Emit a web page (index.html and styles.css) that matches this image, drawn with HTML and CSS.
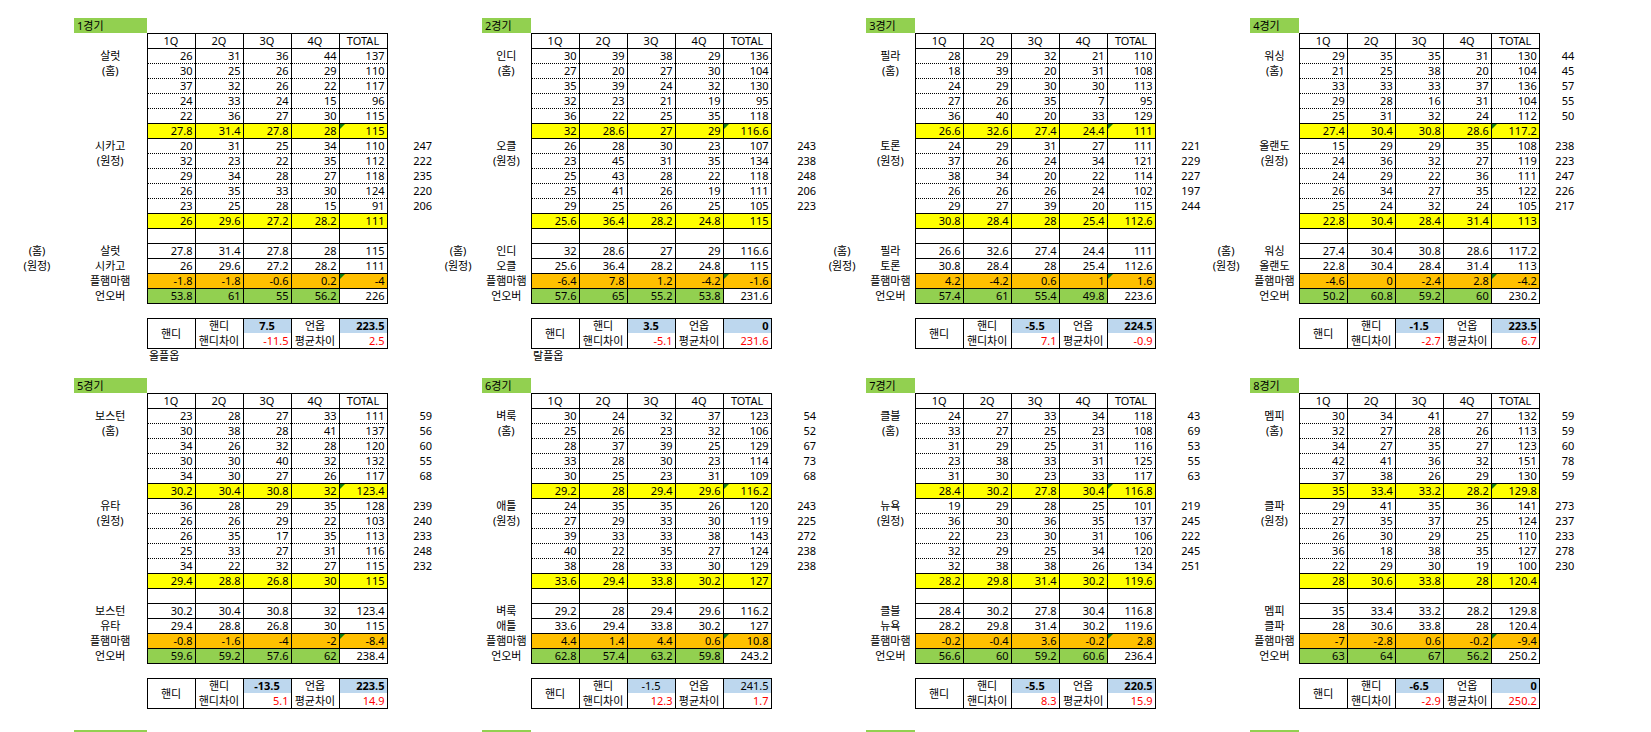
FILE: index.html
```html
<!DOCTYPE html>
<html lang="ko">
<head>
<meta charset="utf-8">
<title>경기 분석</title>
<link rel="stylesheet" href="styles.css">
</head>
<body>
<div class="sheet">
<div class="sec s1">

<table class="blk b1">
<colgroup><col class="ch1"><col class="cl1"><col class="cq"><col class="cq"><col class="cq"><col class="cq"><col class="cq"><col class="cx"></colgroup>
<tr><td></td><td class="t">1경기</td><td colspan="6"></td></tr>
<tr class="r hdr"><td></td><td></td><td>1Q</td><td>2Q</td><td>3Q</td><td>4Q</td><td>TOTAL</td><td></td></tr>
<tr class="r dr"><td></td><td>살럿</td><td>26</td><td>31</td><td>36</td><td>44</td><td>137</td><td></td></tr>
<tr class="r dr"><td></td><td>(홈)</td><td>30</td><td>25</td><td>26</td><td>29</td><td>110</td><td></td></tr>
<tr class="r dr"><td></td><td></td><td>37</td><td>32</td><td>26</td><td>22</td><td>117</td><td></td></tr>
<tr class="r dr"><td></td><td></td><td>24</td><td>33</td><td>24</td><td>15</td><td>96</td><td></td></tr>
<tr class="r dr"><td></td><td></td><td>22</td><td>36</td><td>27</td><td>30</td><td>115</td><td></td></tr>
<tr class="r yl k"><td></td><td></td><td>27.8</td><td>31.4</td><td>27.8</td><td>28</td><td>115</td><td></td></tr>
<tr class="r dr"><td></td><td>시카고</td><td>20</td><td>31</td><td>25</td><td>34</td><td>110</td><td>247</td></tr>
<tr class="r dr"><td></td><td>(원정)</td><td>32</td><td>23</td><td>22</td><td>35</td><td>112</td><td>222</td></tr>
<tr class="r dr"><td></td><td></td><td>29</td><td>34</td><td>28</td><td>27</td><td>118</td><td>235</td></tr>
<tr class="r dr"><td></td><td></td><td>26</td><td>35</td><td>33</td><td>30</td><td>124</td><td>220</td></tr>
<tr class="r dr"><td></td><td></td><td>23</td><td>25</td><td>28</td><td>15</td><td>91</td><td>206</td></tr>
<tr class="r yl"><td></td><td></td><td>26</td><td>29.6</td><td>27.2</td><td>28.2</td><td>111</td><td></td></tr>
<tr class="r sm"><td></td><td></td><td></td><td></td><td></td><td></td><td></td><td></td></tr>
<tr class="r sm"><td>(홈)</td><td>살럿</td><td>27.8</td><td>31.4</td><td>27.8</td><td>28</td><td>115</td><td></td></tr>
<tr class="r sm"><td>(원정)</td><td>시카고</td><td>26</td><td>29.6</td><td>27.2</td><td>28.2</td><td>111</td><td></td></tr>
<tr class="r sm or k"><td></td><td>플햄마햄</td><td>-1.8</td><td>-1.8</td><td>-0.6</td><td>0.2</td><td>-4</td><td></td></tr>
<tr class="r sm gr"><td></td><td>언오버</td><td>53.8</td><td>61</td><td>55</td><td>56.2</td><td>226</td><td></td></tr>
<tr class="bl"><td colspan="8"></td></tr>
<tr class="h1"><td></td><td></td><td class="hb" rowspan="2">핸디</td><td class="hl">핸디</td><td class="hv">7.5</td><td class="hl">언옵</td><td class="hv hr">223.5</td><td></td></tr>
<tr class="h2"><td></td><td></td><td class="hl">핸디차이</td><td class="rv">-11.5</td><td class="hl">평균차이</td><td class="rv">2.5</td><td></td></tr>
<tr class="note"><td></td><td></td><td colspan="6">올플옵</td></tr>
</table>

<table class="blk">
<colgroup><col class="ch"><col class="cl"><col class="cq"><col class="cq"><col class="cq"><col class="cq"><col class="cq"><col class="cx"></colgroup>
<tr><td></td><td class="t">2경기</td><td colspan="6"></td></tr>
<tr class="r hdr"><td></td><td></td><td>1Q</td><td>2Q</td><td>3Q</td><td>4Q</td><td>TOTAL</td><td></td></tr>
<tr class="r dr"><td></td><td>인디</td><td>30</td><td>39</td><td>38</td><td>29</td><td>136</td><td></td></tr>
<tr class="r dr"><td></td><td>(홈)</td><td>27</td><td>20</td><td>27</td><td>30</td><td>104</td><td></td></tr>
<tr class="r dr"><td></td><td></td><td>35</td><td>39</td><td>24</td><td>32</td><td>130</td><td></td></tr>
<tr class="r dr"><td></td><td></td><td>32</td><td>23</td><td>21</td><td>19</td><td>95</td><td></td></tr>
<tr class="r dr"><td></td><td></td><td>36</td><td>22</td><td>25</td><td>35</td><td>118</td><td></td></tr>
<tr class="r yl k"><td></td><td></td><td>32</td><td>28.6</td><td>27</td><td>29</td><td>116.6</td><td></td></tr>
<tr class="r dr"><td></td><td>오클</td><td>26</td><td>28</td><td>30</td><td>23</td><td>107</td><td>243</td></tr>
<tr class="r dr"><td></td><td>(원정)</td><td>23</td><td>45</td><td>31</td><td>35</td><td>134</td><td>238</td></tr>
<tr class="r dr"><td></td><td></td><td>25</td><td>43</td><td>28</td><td>22</td><td>118</td><td>248</td></tr>
<tr class="r dr"><td></td><td></td><td>25</td><td>41</td><td>26</td><td>19</td><td>111</td><td>206</td></tr>
<tr class="r dr"><td></td><td></td><td>29</td><td>25</td><td>26</td><td>25</td><td>105</td><td>223</td></tr>
<tr class="r yl"><td></td><td></td><td>25.6</td><td>36.4</td><td>28.2</td><td>24.8</td><td>115</td><td></td></tr>
<tr class="r sm"><td></td><td></td><td></td><td></td><td></td><td></td><td></td><td></td></tr>
<tr class="r sm"><td>(홈)</td><td>인디</td><td>32</td><td>28.6</td><td>27</td><td>29</td><td>116.6</td><td></td></tr>
<tr class="r sm"><td>(원정)</td><td>오클</td><td>25.6</td><td>36.4</td><td>28.2</td><td>24.8</td><td>115</td><td></td></tr>
<tr class="r sm or k"><td></td><td>플햄마햄</td><td>-6.4</td><td>7.8</td><td>1.2</td><td>-4.2</td><td>-1.6</td><td></td></tr>
<tr class="r sm gr"><td></td><td>언오버</td><td>57.6</td><td>65</td><td>55.2</td><td>53.8</td><td>231.6</td><td></td></tr>
<tr class="bl"><td colspan="8"></td></tr>
<tr class="h1"><td></td><td></td><td class="hb" rowspan="2">핸디</td><td class="hl">핸디</td><td class="hv">3.5</td><td class="hl">언옵</td><td class="hv hr">0</td><td></td></tr>
<tr class="h2"><td></td><td></td><td class="hl">핸디차이</td><td class="rv">-5.1</td><td class="hl">평균차이</td><td class="rv">231.6</td><td></td></tr>
<tr class="note"><td></td><td></td><td colspan="6">랄플옵</td></tr>
</table>

<table class="blk">
<colgroup><col class="ch"><col class="cl"><col class="cq"><col class="cq"><col class="cq"><col class="cq"><col class="cq"><col class="cx"></colgroup>
<tr><td></td><td class="t">3경기</td><td colspan="6"></td></tr>
<tr class="r hdr"><td></td><td></td><td>1Q</td><td>2Q</td><td>3Q</td><td>4Q</td><td>TOTAL</td><td></td></tr>
<tr class="r dr"><td></td><td>필라</td><td>28</td><td>29</td><td>32</td><td>21</td><td>110</td><td></td></tr>
<tr class="r dr"><td></td><td>(홈)</td><td>18</td><td>39</td><td>20</td><td>31</td><td>108</td><td></td></tr>
<tr class="r dr"><td></td><td></td><td>24</td><td>29</td><td>30</td><td>30</td><td>113</td><td></td></tr>
<tr class="r dr"><td></td><td></td><td>27</td><td>26</td><td>35</td><td>7</td><td>95</td><td></td></tr>
<tr class="r dr"><td></td><td></td><td>36</td><td>40</td><td>20</td><td>33</td><td>129</td><td></td></tr>
<tr class="r yl k"><td></td><td></td><td>26.6</td><td>32.6</td><td>27.4</td><td>24.4</td><td>111</td><td></td></tr>
<tr class="r dr"><td></td><td>토론</td><td>24</td><td>29</td><td>31</td><td>27</td><td>111</td><td>221</td></tr>
<tr class="r dr"><td></td><td>(원정)</td><td>37</td><td>26</td><td>24</td><td>34</td><td>121</td><td>229</td></tr>
<tr class="r dr"><td></td><td></td><td>38</td><td>34</td><td>20</td><td>22</td><td>114</td><td>227</td></tr>
<tr class="r dr"><td></td><td></td><td>26</td><td>26</td><td>26</td><td>24</td><td>102</td><td>197</td></tr>
<tr class="r dr"><td></td><td></td><td>29</td><td>27</td><td>39</td><td>20</td><td>115</td><td>244</td></tr>
<tr class="r yl"><td></td><td></td><td>30.8</td><td>28.4</td><td>28</td><td>25.4</td><td>112.6</td><td></td></tr>
<tr class="r sm"><td></td><td></td><td></td><td></td><td></td><td></td><td></td><td></td></tr>
<tr class="r sm"><td>(홈)</td><td>필라</td><td>26.6</td><td>32.6</td><td>27.4</td><td>24.4</td><td>111</td><td></td></tr>
<tr class="r sm"><td>(원정)</td><td>토론</td><td>30.8</td><td>28.4</td><td>28</td><td>25.4</td><td>112.6</td><td></td></tr>
<tr class="r sm or k"><td></td><td>플햄마햄</td><td>4.2</td><td>-4.2</td><td>0.6</td><td>1</td><td>1.6</td><td></td></tr>
<tr class="r sm gr"><td></td><td>언오버</td><td>57.4</td><td>61</td><td>55.4</td><td>49.8</td><td>223.6</td><td></td></tr>
<tr class="bl"><td colspan="8"></td></tr>
<tr class="h1"><td></td><td></td><td class="hb" rowspan="2">핸디</td><td class="hl">핸디</td><td class="hv">-5.5</td><td class="hl">언옵</td><td class="hv hr">224.5</td><td></td></tr>
<tr class="h2"><td></td><td></td><td class="hl">핸디차이</td><td class="rv">7.1</td><td class="hl">평균차이</td><td class="rv">-0.9</td><td></td></tr>
</table>

<table class="blk b4">
<colgroup><col class="ch"><col class="cl"><col class="cq"><col class="cq"><col class="cq"><col class="cq"><col class="cq"><col class="cx4"></colgroup>
<tr><td></td><td class="t">4경기</td><td colspan="6"></td></tr>
<tr class="r hdr"><td></td><td></td><td>1Q</td><td>2Q</td><td>3Q</td><td>4Q</td><td>TOTAL</td><td></td></tr>
<tr class="r dr"><td></td><td>워싱</td><td>29</td><td>35</td><td>35</td><td>31</td><td>130</td><td>44</td></tr>
<tr class="r dr"><td></td><td>(홈)</td><td>21</td><td>25</td><td>38</td><td>20</td><td>104</td><td>45</td></tr>
<tr class="r dr"><td></td><td></td><td>33</td><td>33</td><td>33</td><td>37</td><td>136</td><td>57</td></tr>
<tr class="r dr"><td></td><td></td><td>29</td><td>28</td><td>16</td><td>31</td><td>104</td><td>55</td></tr>
<tr class="r dr"><td></td><td></td><td>25</td><td>31</td><td>32</td><td>24</td><td>112</td><td>50</td></tr>
<tr class="r yl k"><td></td><td></td><td>27.4</td><td>30.4</td><td>30.8</td><td>28.6</td><td>117.2</td><td></td></tr>
<tr class="r dr"><td></td><td>올랜도</td><td>15</td><td>29</td><td>29</td><td>35</td><td>108</td><td>238</td></tr>
<tr class="r dr"><td></td><td>(원정)</td><td>24</td><td>36</td><td>32</td><td>27</td><td>119</td><td>223</td></tr>
<tr class="r dr"><td></td><td></td><td>24</td><td>29</td><td>22</td><td>36</td><td>111</td><td>247</td></tr>
<tr class="r dr"><td></td><td></td><td>26</td><td>34</td><td>27</td><td>35</td><td>122</td><td>226</td></tr>
<tr class="r dr"><td></td><td></td><td>25</td><td>24</td><td>32</td><td>24</td><td>105</td><td>217</td></tr>
<tr class="r yl"><td></td><td></td><td>22.8</td><td>30.4</td><td>28.4</td><td>31.4</td><td>113</td><td></td></tr>
<tr class="r sm"><td></td><td></td><td></td><td></td><td></td><td></td><td></td><td></td></tr>
<tr class="r sm"><td>(홈)</td><td>워싱</td><td>27.4</td><td>30.4</td><td>30.8</td><td>28.6</td><td>117.2</td><td></td></tr>
<tr class="r sm"><td>(원정)</td><td>올랜도</td><td>22.8</td><td>30.4</td><td>28.4</td><td>31.4</td><td>113</td><td></td></tr>
<tr class="r sm or k"><td></td><td>플햄마햄</td><td>-4.6</td><td>0</td><td>-2.4</td><td>2.8</td><td>-4.2</td><td></td></tr>
<tr class="r sm gr"><td></td><td>언오버</td><td>50.2</td><td>60.8</td><td>59.2</td><td>60</td><td>230.2</td><td></td></tr>
<tr class="bl"><td colspan="8"></td></tr>
<tr class="h1"><td></td><td></td><td class="hb" rowspan="2">핸디</td><td class="hl">핸디</td><td class="hv">-1.5</td><td class="hl">언옵</td><td class="hv hr">223.5</td><td></td></tr>
<tr class="h2"><td></td><td></td><td class="hl">핸디차이</td><td class="rv">-2.7</td><td class="hl">평균차이</td><td class="rv">6.7</td><td></td></tr>
</table>

</div>
<div class="sec s2">

<table class="blk b1">
<colgroup><col class="ch1"><col class="cl1"><col class="cq"><col class="cq"><col class="cq"><col class="cq"><col class="cq"><col class="cx"></colgroup>
<tr><td></td><td class="t">5경기</td><td colspan="6"></td></tr>
<tr class="r hdr"><td></td><td></td><td>1Q</td><td>2Q</td><td>3Q</td><td>4Q</td><td>TOTAL</td><td></td></tr>
<tr class="r dr"><td></td><td>보스턴</td><td>23</td><td>28</td><td>27</td><td>33</td><td>111</td><td>59</td></tr>
<tr class="r dr"><td></td><td>(홈)</td><td>30</td><td>38</td><td>28</td><td>41</td><td>137</td><td>56</td></tr>
<tr class="r dr"><td></td><td></td><td>34</td><td>26</td><td>32</td><td>28</td><td>120</td><td>60</td></tr>
<tr class="r dr"><td></td><td></td><td>30</td><td>30</td><td>40</td><td>32</td><td>132</td><td>55</td></tr>
<tr class="r dr"><td></td><td></td><td>34</td><td>30</td><td>27</td><td>26</td><td>117</td><td>68</td></tr>
<tr class="r yl k"><td></td><td></td><td>30.2</td><td>30.4</td><td>30.8</td><td>32</td><td>123.4</td><td></td></tr>
<tr class="r dr"><td></td><td>유타</td><td>36</td><td>28</td><td>29</td><td>35</td><td>128</td><td>239</td></tr>
<tr class="r dr"><td></td><td>(원정)</td><td>26</td><td>26</td><td>29</td><td>22</td><td>103</td><td>240</td></tr>
<tr class="r dr"><td></td><td></td><td>26</td><td>35</td><td>17</td><td>35</td><td>113</td><td>233</td></tr>
<tr class="r dr"><td></td><td></td><td>25</td><td>33</td><td>27</td><td>31</td><td>116</td><td>248</td></tr>
<tr class="r dr"><td></td><td></td><td>34</td><td>22</td><td>32</td><td>27</td><td>115</td><td>232</td></tr>
<tr class="r yl"><td></td><td></td><td>29.4</td><td>28.8</td><td>26.8</td><td>30</td><td>115</td><td></td></tr>
<tr class="r sm"><td></td><td></td><td></td><td></td><td></td><td></td><td></td><td></td></tr>
<tr class="r sm"><td></td><td>보스턴</td><td>30.2</td><td>30.4</td><td>30.8</td><td>32</td><td>123.4</td><td></td></tr>
<tr class="r sm"><td></td><td>유타</td><td>29.4</td><td>28.8</td><td>26.8</td><td>30</td><td>115</td><td></td></tr>
<tr class="r sm or k"><td></td><td>플햄마햄</td><td>-0.8</td><td>-1.6</td><td>-4</td><td>-2</td><td>-8.4</td><td></td></tr>
<tr class="r sm gr"><td></td><td>언오버</td><td>59.6</td><td>59.2</td><td>57.6</td><td>62</td><td>238.4</td><td></td></tr>
<tr class="bl"><td colspan="8"></td></tr>
<tr class="h1"><td></td><td></td><td class="hb" rowspan="2">핸디</td><td class="hl">핸디</td><td class="hv">-13.5</td><td class="hl">언옵</td><td class="hv hr">223.5</td><td></td></tr>
<tr class="h2"><td></td><td></td><td class="hl">핸디차이</td><td class="rv">5.1</td><td class="hl">평균차이</td><td class="rv">14.9</td><td></td></tr>
</table>

<table class="blk">
<colgroup><col class="ch"><col class="cl"><col class="cq"><col class="cq"><col class="cq"><col class="cq"><col class="cq"><col class="cx"></colgroup>
<tr><td></td><td class="t">6경기</td><td colspan="6"></td></tr>
<tr class="r hdr"><td></td><td></td><td>1Q</td><td>2Q</td><td>3Q</td><td>4Q</td><td>TOTAL</td><td></td></tr>
<tr class="r dr"><td></td><td>벼룩</td><td>30</td><td>24</td><td>32</td><td>37</td><td>123</td><td>54</td></tr>
<tr class="r dr"><td></td><td>(홈)</td><td>25</td><td>26</td><td>23</td><td>32</td><td>106</td><td>52</td></tr>
<tr class="r dr"><td></td><td></td><td>28</td><td>37</td><td>39</td><td>25</td><td>129</td><td>67</td></tr>
<tr class="r dr"><td></td><td></td><td>33</td><td>28</td><td>30</td><td>23</td><td>114</td><td>73</td></tr>
<tr class="r dr"><td></td><td></td><td>30</td><td>25</td><td>23</td><td>31</td><td>109</td><td>68</td></tr>
<tr class="r yl k"><td></td><td></td><td>29.2</td><td>28</td><td>29.4</td><td>29.6</td><td>116.2</td><td></td></tr>
<tr class="r dr"><td></td><td>애틀</td><td>24</td><td>35</td><td>35</td><td>26</td><td>120</td><td>243</td></tr>
<tr class="r dr"><td></td><td>(원정)</td><td>27</td><td>29</td><td>33</td><td>30</td><td>119</td><td>225</td></tr>
<tr class="r dr"><td></td><td></td><td>39</td><td>33</td><td>33</td><td>38</td><td>143</td><td>272</td></tr>
<tr class="r dr"><td></td><td></td><td>40</td><td>22</td><td>35</td><td>27</td><td>124</td><td>238</td></tr>
<tr class="r dr"><td></td><td></td><td>38</td><td>28</td><td>33</td><td>30</td><td>129</td><td>238</td></tr>
<tr class="r yl"><td></td><td></td><td>33.6</td><td>29.4</td><td>33.8</td><td>30.2</td><td>127</td><td></td></tr>
<tr class="r sm"><td></td><td></td><td></td><td></td><td></td><td></td><td></td><td></td></tr>
<tr class="r sm"><td></td><td>벼룩</td><td>29.2</td><td>28</td><td>29.4</td><td>29.6</td><td>116.2</td><td></td></tr>
<tr class="r sm"><td></td><td>애틀</td><td>33.6</td><td>29.4</td><td>33.8</td><td>30.2</td><td>127</td><td></td></tr>
<tr class="r sm or k"><td></td><td>플햄마햄</td><td>4.4</td><td>1.4</td><td>4.4</td><td>0.6</td><td>10.8</td><td></td></tr>
<tr class="r sm gr"><td></td><td>언오버</td><td>62.8</td><td>57.4</td><td>63.2</td><td>59.8</td><td>243.2</td><td></td></tr>
<tr class="bl"><td colspan="8"></td></tr>
<tr class="h1"><td></td><td></td><td class="hb" rowspan="2">핸디</td><td class="hl">핸디</td><td class="hv nb">-1.5</td><td class="hl">언옵</td><td class="hv hr nb">241.5</td><td></td></tr>
<tr class="h2"><td></td><td></td><td class="hl">핸디차이</td><td class="rv">12.3</td><td class="hl">평균차이</td><td class="rv">1.7</td><td></td></tr>
</table>

<table class="blk">
<colgroup><col class="ch"><col class="cl"><col class="cq"><col class="cq"><col class="cq"><col class="cq"><col class="cq"><col class="cx"></colgroup>
<tr><td></td><td class="t">7경기</td><td colspan="6"></td></tr>
<tr class="r hdr"><td></td><td></td><td>1Q</td><td>2Q</td><td>3Q</td><td>4Q</td><td>TOTAL</td><td></td></tr>
<tr class="r dr"><td></td><td>클블</td><td>24</td><td>27</td><td>33</td><td>34</td><td>118</td><td>43</td></tr>
<tr class="r dr"><td></td><td>(홈)</td><td>33</td><td>27</td><td>25</td><td>23</td><td>108</td><td>69</td></tr>
<tr class="r dr"><td></td><td></td><td>31</td><td>29</td><td>25</td><td>31</td><td>116</td><td>53</td></tr>
<tr class="r dr"><td></td><td></td><td>23</td><td>38</td><td>33</td><td>31</td><td>125</td><td>55</td></tr>
<tr class="r dr"><td></td><td></td><td>31</td><td>30</td><td>23</td><td>33</td><td>117</td><td>63</td></tr>
<tr class="r yl k"><td></td><td></td><td>28.4</td><td>30.2</td><td>27.8</td><td>30.4</td><td>116.8</td><td></td></tr>
<tr class="r dr"><td></td><td>뉴욕</td><td>19</td><td>29</td><td>28</td><td>25</td><td>101</td><td>219</td></tr>
<tr class="r dr"><td></td><td>(원정)</td><td>36</td><td>30</td><td>36</td><td>35</td><td>137</td><td>245</td></tr>
<tr class="r dr"><td></td><td></td><td>22</td><td>23</td><td>30</td><td>31</td><td>106</td><td>222</td></tr>
<tr class="r dr"><td></td><td></td><td>32</td><td>29</td><td>25</td><td>34</td><td>120</td><td>245</td></tr>
<tr class="r dr"><td></td><td></td><td>32</td><td>38</td><td>38</td><td>26</td><td>134</td><td>251</td></tr>
<tr class="r yl"><td></td><td></td><td>28.2</td><td>29.8</td><td>31.4</td><td>30.2</td><td>119.6</td><td></td></tr>
<tr class="r sm"><td></td><td></td><td></td><td></td><td></td><td></td><td></td><td></td></tr>
<tr class="r sm"><td></td><td>클블</td><td>28.4</td><td>30.2</td><td>27.8</td><td>30.4</td><td>116.8</td><td></td></tr>
<tr class="r sm"><td></td><td>뉴욕</td><td>28.2</td><td>29.8</td><td>31.4</td><td>30.2</td><td>119.6</td><td></td></tr>
<tr class="r sm or k"><td></td><td>플햄마햄</td><td>-0.2</td><td>-0.4</td><td>3.6</td><td>-0.2</td><td>2.8</td><td></td></tr>
<tr class="r sm gr"><td></td><td>언오버</td><td>56.6</td><td>60</td><td>59.2</td><td>60.6</td><td>236.4</td><td></td></tr>
<tr class="bl"><td colspan="8"></td></tr>
<tr class="h1"><td></td><td></td><td class="hb" rowspan="2">핸디</td><td class="hl">핸디</td><td class="hv">-5.5</td><td class="hl">언옵</td><td class="hv hr">220.5</td><td></td></tr>
<tr class="h2"><td></td><td></td><td class="hl">핸디차이</td><td class="rv">8.3</td><td class="hl">평균차이</td><td class="rv">15.9</td><td></td></tr>
</table>

<table class="blk b4">
<colgroup><col class="ch"><col class="cl"><col class="cq"><col class="cq"><col class="cq"><col class="cq"><col class="cq"><col class="cx4"></colgroup>
<tr><td></td><td class="t">8경기</td><td colspan="6"></td></tr>
<tr class="r hdr"><td></td><td></td><td>1Q</td><td>2Q</td><td>3Q</td><td>4Q</td><td>TOTAL</td><td></td></tr>
<tr class="r dr"><td></td><td>멤피</td><td>30</td><td>34</td><td>41</td><td>27</td><td>132</td><td>59</td></tr>
<tr class="r dr"><td></td><td>(홈)</td><td>32</td><td>27</td><td>28</td><td>26</td><td>113</td><td>59</td></tr>
<tr class="r dr"><td></td><td></td><td>34</td><td>27</td><td>35</td><td>27</td><td>123</td><td>60</td></tr>
<tr class="r dr"><td></td><td></td><td>42</td><td>41</td><td>36</td><td>32</td><td>151</td><td>78</td></tr>
<tr class="r dr"><td></td><td></td><td>37</td><td>38</td><td>26</td><td>29</td><td>130</td><td>59</td></tr>
<tr class="r yl k"><td></td><td></td><td>35</td><td>33.4</td><td>33.2</td><td>28.2</td><td>129.8</td><td></td></tr>
<tr class="r dr"><td></td><td>클파</td><td>29</td><td>41</td><td>35</td><td>36</td><td>141</td><td>273</td></tr>
<tr class="r dr"><td></td><td>(원정)</td><td>27</td><td>35</td><td>37</td><td>25</td><td>124</td><td>237</td></tr>
<tr class="r dr"><td></td><td></td><td>26</td><td>30</td><td>29</td><td>25</td><td>110</td><td>233</td></tr>
<tr class="r dr"><td></td><td></td><td>36</td><td>18</td><td>38</td><td>35</td><td>127</td><td>278</td></tr>
<tr class="r dr"><td></td><td></td><td>22</td><td>29</td><td>30</td><td>19</td><td>100</td><td>230</td></tr>
<tr class="r yl"><td></td><td></td><td>28</td><td>30.6</td><td>33.8</td><td>28</td><td>120.4</td><td></td></tr>
<tr class="r sm"><td></td><td></td><td></td><td></td><td></td><td></td><td></td><td></td></tr>
<tr class="r sm"><td></td><td>멤피</td><td>35</td><td>33.4</td><td>33.2</td><td>28.2</td><td>129.8</td><td></td></tr>
<tr class="r sm"><td></td><td>클파</td><td>28</td><td>30.6</td><td>33.8</td><td>28</td><td>120.4</td><td></td></tr>
<tr class="r sm or k"><td></td><td>플햄마햄</td><td>-7</td><td>-2.8</td><td>0.6</td><td>-0.2</td><td>-9.4</td><td></td></tr>
<tr class="r sm gr"><td></td><td>언오버</td><td>63</td><td>64</td><td>67</td><td>56.2</td><td>250.2</td><td></td></tr>
<tr class="bl"><td colspan="8"></td></tr>
<tr class="h1"><td></td><td></td><td class="hb" rowspan="2">핸디</td><td class="hl">핸디</td><td class="hv">-6.5</td><td class="hl">언옵</td><td class="hv hr">0</td><td></td></tr>
<tr class="h2"><td></td><td></td><td class="hl">핸디차이</td><td class="rv">-2.9</td><td class="hl">평균차이</td><td class="rv">250.2</td><td></td></tr>
</table>

</div>
<div class="sec s3">
<div class="st st1"><i></i></div>
<div class="st"><i></i></div>
<div class="st"><i></i></div>
<div class="st st4"><i></i></div>
</div>
</div>
</body>
</html>
```

FILE: styles.css
```css
html, body {
  margin: 0;
  padding: 0;
  background: #fff;
  overflow: hidden;
}
body {
  width: 1651px;
  height: 732px;
  font-family: "Noto Sans", "Noto Sans CJK KR", sans-serif;
  font-size: 11px;
  color: #000;
}
.sheet {
  padding-top: 18px;
}
.sec {
  display: flex;
  align-items: flex-start;
}
.s1 { height: 360px; }
.s2 { height: 352px; }

.blk {
  border-collapse: collapse;
  table-layout: fixed;
  width: 384px;
  flex: none;
}
.b1 { width: 434px; }
.b4 { width: 374px; }

col.ch1 { width: 74px; }
col.cl1 { width: 73px; }
col.ch { width: 48px; }
col.cl { width: 49px; }
col.cq { width: 48px; }
col.cx { width: 47px; }
col.cx4 { width: 37px; }

tr { height: 15px; }
td {
  padding: 0 2px;
  line-height: 13px;
  white-space: nowrap;
  overflow: visible;
  vertical-align: middle;
}

.t {
  background: #92d050;
  text-align: left;
  padding-left: 3px;
}

.r td:nth-child(1),
.r td:nth-child(2) {
  text-align: center;
}
.r td:nth-child(8) {
  text-align: right;
}
.r td:nth-child(n+3):nth-child(-n+7) {
  border-left: 1px solid #000;
  border-right: 1px solid #000;
  text-align: right;
}
.hdr td:nth-child(n+3):nth-child(-n+7) {
  text-align: center;
  border-top: 1px solid #000;
  border-bottom: 1px solid #000;
}
.dr td:nth-child(n+3):nth-child(-n+7) {
  border-bottom: 1px dotted #000;
}
.yl td:nth-child(n+3):nth-child(-n+7) {
  background: #ffff00;
  border-top: 1px solid #000;
  border-bottom: 1px solid #000;
}
.sm td:nth-child(n+3):nth-child(-n+7) {
  border-top: 1px solid #000;
  border-bottom: 1px solid #000;
}
.or td:nth-child(n+3):nth-child(-n+7) {
  background: #ffc000;
}
.gr td:nth-child(n+3):nth-child(-n+6) {
  background: #92d050;
}
.k td:nth-child(7) {
  position: relative;
}
.k td:nth-child(7)::before {
  content: "";
  position: absolute;
  left: 0;
  top: 0;
  border-top: 5px solid #107c10;
  border-right: 5px solid transparent;
}

.hb {
  border: 1px solid #000;
  text-align: center;
  vertical-align: middle;
}
.hl, .hv, .rv {
  border-left: 1px solid #000;
  border-right: 1px solid #000;
}
.h1 .hl, .h1 .hv {
  border-top: 1px solid #000;
}
.h2 .hl, .h2 .rv {
  border-bottom: 1px solid #000;
}
.hl { text-align: center; }
.hv {
  background: #bdd7ee;
  font-weight: bold;
  text-align: center;
}
.hv.hr { text-align: right; }
.hv.nb { font-weight: normal; }
.rv {
  color: #ff0000;
  text-align: right;
}
.note td { text-align: left; }

.st {
  width: 384px;
  padding-left: 48px;
  box-sizing: border-box;
  flex: none;
}
.st i {
  display: block;
  width: 49px;
  height: 15px;
  background: #92d050;
}
.st1 { width: 434px; padding-left: 74px; }
.st1 i { width: 73px; }
.st4 { width: 374px; }
```
